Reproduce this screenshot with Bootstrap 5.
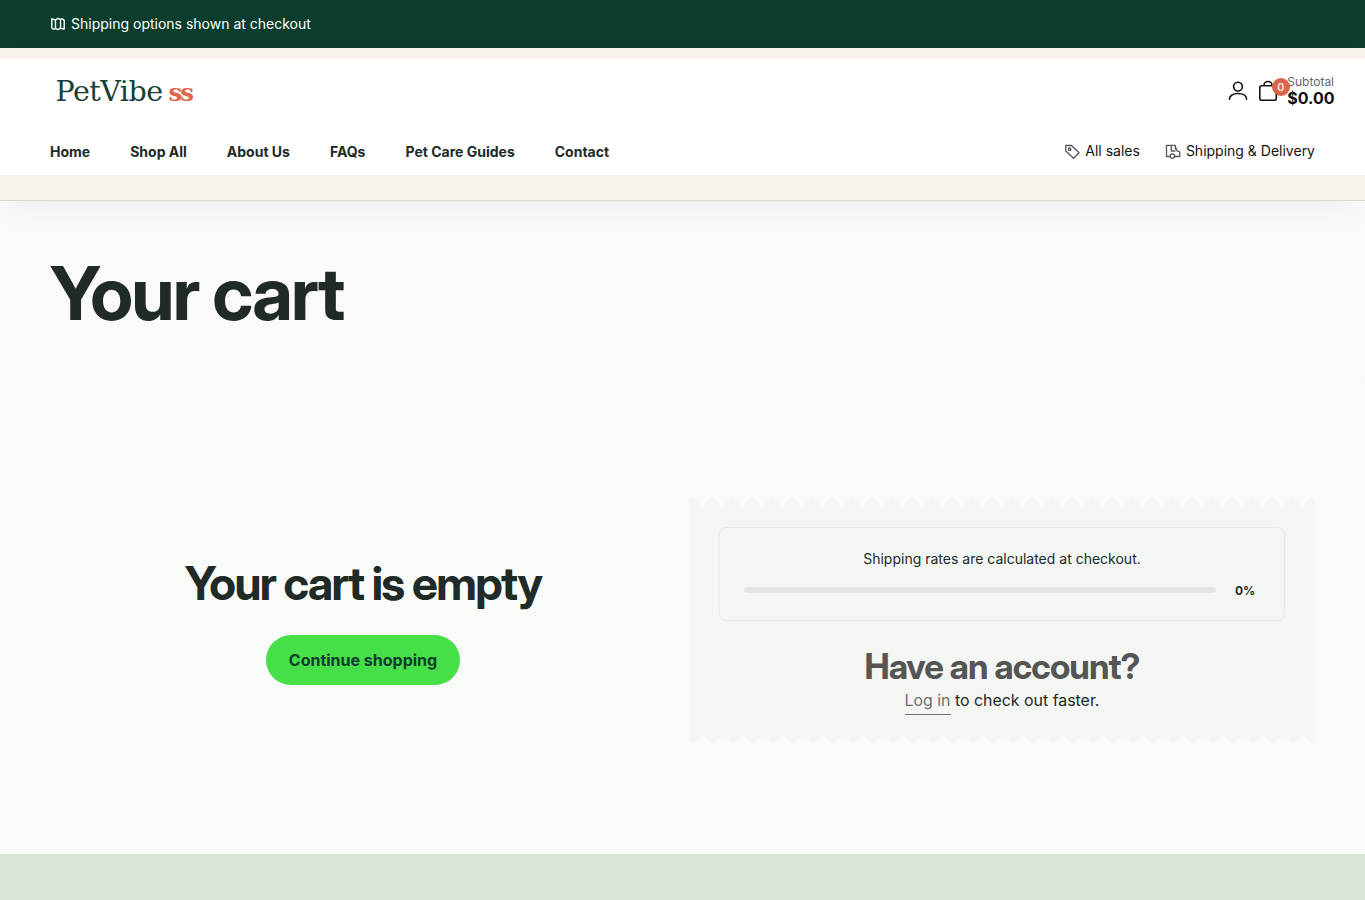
<!DOCTYPE html>
<html lang="en">
<head>
<meta charset="utf-8">
<meta name="viewport" content="width=device-width, initial-scale=1">
<title>Your cart – PetVibe</title>
<link href="https://cdn.jsdelivr.net/npm/bootstrap@5.3.0/dist/css/bootstrap.min.css" rel="stylesheet">
<style>
body{font-family:Inter,sans-serif;color:#202a27;background:#f9fbf8;height:900px;overflow:hidden}
h1,h2,h3{font-family:"Inter Display",Inter,sans-serif}
a{color:inherit;text-decoration:none}
svg{display:block;flex:none}
.gutter{padding-left:50px;padding-right:50px}
.announce{height:48px;background:#0b3d2e;color:#fff;font-size:14px}
.announce span{margin-left:5px;padding-bottom:2px}
.site-head{height:153px;background:#f7f2ea;border-bottom:1px solid #d6d8ce;padding-top:11px;box-shadow:0 12px 32px -8px rgba(11,61,46,.07)}
.head-top{height:70px;padding-left:54px;padding-right:30.500px}
.head-nav{height:46px;font-size:14px;padding-bottom:2px}
.main-links{font-weight:700;gap:40px}
.side-links{gap:25px;color:#111}
.side-links span{padding-bottom:2px}
.account{margin-right:6px}
.count{left:12px;top:-1px;width:18px;height:18px;background:#da654b;color:#fff;font-size:11px;font-weight:500}
.totals{color:#111;line-height:16px;margin:-1px 0 0 7.500px}
.totals small{font-size:12px;color:#666}
.title-band{height:188px;background:linear-gradient(#fafafa 85%,#f9fbf8)}
.title-band h1{font-size:73.800px;font-weight:700;letter-spacing:-.025em;line-height:75px;padding-top:55px}
.cart-grid{height:465px;display:grid;grid-template-columns:626px 626px;column-gap:13px}
.empty{padding-top:169px}
.empty h2{font-size:46px;font-weight:700;letter-spacing:-.035em;line-height:50px;margin-bottom:27px}
.btn-go{width:194px;height:50px;border-radius:25px;background:#47df47;color:#0b3d2e;font-weight:700;font-size:16px}
.summary{margin-top:108px}
.sheet{height:227px;background:#f4f6f3;padding:20px 30px 0}
.rates{height:94px;border:1px solid #e8eae7;border-radius:7px;padding:20px 24px 0;font-size:14px}
.track{width:472px;height:6px;border-radius:3px;background:#e3e5e2;margin-bottom:2px}
.meter{margin-top:12px}
.pct{font-size:12px;margin-left:19px;line-height:19px}
.sheet h3{font-size:35px;font-weight:700;letter-spacing:-.025em;line-height:40px;color:#555;margin-top:25px}
.signin{font-size:15.900px;padding-top:3px}
.login{color:#707070;border-bottom:1px solid #707070;padding-bottom:4px}
.foot{height:46px;background:#dbe6da}
</style>
</head>
<body>
<div class="announce gutter d-flex align-items-center">
  <svg width="16" height="16" viewBox="0 0 16 16" fill="none" stroke="#fff" stroke-width="1.4" stroke-linejoin="round"><path d="M1.800 2.800 5.500 4 8 2.300 10.500 3.500 12.700 3 14.200 4.300V13L10.500 12.200 8 13.700 5.500 12.500 3.300 13.200 1.800 12zM5.500 4V12.500M10.500 3.500V12.200"/></svg>
  <span>Shipping options shown at checkout</span>
</div>
<header class="site-head position-relative">
  <div class="bg-white">
    <div class="head-top d-flex justify-content-between">
      <a href="#" aria-label="PetVibe"><svg width="150" height="62"><text x="1.500" y="42" font-family="DejaVu Serif" font-size="28.500" fill="#173f33" textLength="107.500" lengthAdjust="spacing">PetVibe</text><text x="114.500" y="42" font-family="DejaVu Serif" font-weight="700" font-size="24.500" fill="#e0654b" textLength="25.500" lengthAdjust="spacing">ss</text></svg></a>
      <div class="d-flex pt-3">
        <svg class="account mt-1" width="24" height="24" viewBox="0 0 24 24" fill="none" stroke="#111" stroke-width="1.6" stroke-linecap="round"><circle cx="12" cy="7.600" r="4.400"/><path d="M3.500 20.300v-.5c0-3.200 3.600-5.300 8.500-5.300s8.500 2.100 8.500 5.300v.5"/></svg>
        <div class="position-relative mt-1">
          <svg width="24" height="24" viewBox="0 0 24 24" fill="none" stroke="#111" stroke-width="1.600"><rect x="3.800" y="6.800" width="16.500" height="14.500" rx="2"/><path d="M8 6.500V6a4 3.500 0 0 1 8 0v.5"/></svg>
          <span class="count position-absolute rounded-circle d-flex align-items-center justify-content-center ms-1">0</span>
        </div>
        <div class="totals d-flex flex-column"><small>Subtotal</small><b>$0.00</b></div>
      </div>
    </div>
    <nav class="head-nav gutter d-flex justify-content-between align-items-center">
      <div class="main-links d-flex"><a href="#">Home</a><a href="#">Shop All</a><a href="#">About Us</a><a href="#">FAQs</a><a href="#">Pet Care Guides</a><a href="#">Contact</a></div>
      <div class="side-links d-flex">
        <a href="#" class="d-flex align-items-center"><svg class="me-1" width="17" height="17" viewBox="0 0 17 17" fill="none" stroke="#555" stroke-width="1.300" stroke-linejoin="round"><path d="M1.800 2.500H7.500L15 9.800 9.600 15.300 1.800 8z"/><circle cx="5.600" cy="6.200" r="1.200"/></svg><span>All sales</span></a>
        <a href="#" class="d-flex align-items-center"><svg class="me-1" width="17" height="17" viewBox="0 0 17 17" fill="none" stroke="#555" stroke-width="1.300" stroke-linejoin="round"><path d="M4.800 13.500H1.500V2.300H10.300V5.300L11.800 7.600 14.800 9V13.500H10M6.300 2.500V8H10.300M10.300 5.300H12"/><circle cx="7.400" cy="13" r="2.200"/></svg><span>Shipping &amp; Delivery</span></a>
      </div>
    </nav>
  </div>
</header>
<main>
  <div class="title-band gutter"><h1 class="m-0">Your cart</h1></div>
  <div class="cart-grid gutter">
    <section class="empty text-center d-flex flex-column align-items-center">
      <h2>Your cart is empty</h2>
      <a href="#" class="btn btn-go d-flex align-items-center justify-content-center">Continue shopping</a>
    </section>
    <aside class="summary text-center">
      <svg width="626" height="10"><defs><pattern id="zig" x="-7" width="20" height="10" patternUnits="userSpaceOnUse"><path d="M0 10 10 0 20 10z" fill="#f4f6f3"/></pattern></defs><rect width="626" height="10" fill="url(#zig)"/></svg>
      <div class="sheet">
        <div class="rates"><div>Shipping rates are calculated at checkout.</div><div class="meter d-flex align-items-center"><div class="track"></div><b class="pct">0%</b></div></div>
        <h3 class="mb-0">Have an account?</h3>
        <div class="signin"><a href="#" class="login">Log in</a> to check out faster.</div>
      </div>
      <svg width="626" height="10"><defs><pattern id="zag" x="-6" width="20" height="10" patternUnits="userSpaceOnUse"><path d="M0 0 10 10 20 0z" fill="#f4f6f3"/></pattern></defs><rect width="626" height="10" fill="url(#zag)"/></svg>
    </aside>
  </div>
</main>
<footer class="foot"></footer>
<script src="https://cdn.jsdelivr.net/npm/bootstrap@5.3.0/dist/js/bootstrap.bundle.min.js"></script>
</body>
</html>
